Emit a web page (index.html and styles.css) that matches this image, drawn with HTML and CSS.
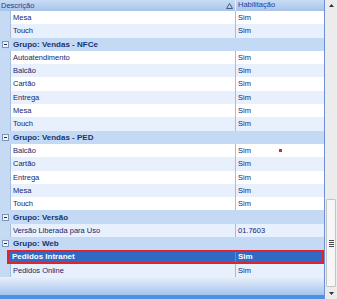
FILE: index.html
```html
<!DOCTYPE html>
<html lang="pt-BR">
<head>
    <meta charset="UTF-8">
    <title>Habilitações</title>
    <link rel="stylesheet" href="styles.css">
</head>
<body>
    <div class="grid">
        <div class="main">
            <div class="head">
                <div class="hcell c1">
                    <span>Descrição</span>
                    <svg class="sort" width="7" height="6" viewBox="0 0 7 6"><path d="M3.5 0.5 L6.5 5.5 L0.5 5.5 Z" fill="none" stroke="#4a5a78" stroke-width="1"/></svg>
                </div>
                <div class="hcell c2">Habilitação</div>
            </div>

            <div class="body">
                <div class="row"><span class="indent"></span><span class="cell c1">Mesa</span><span class="cell c2">Sim</span></div>
                <div class="row alt"><span class="indent"></span><span class="cell c1">Touch</span><span class="cell c2">Sim</span></div>

                <div class="group"><span class="toggle"></span>Grupo: Vendas - NFCe</div>
                <div class="row"><span class="indent"></span><span class="cell c1">Autoatendimento</span><span class="cell c2">Sim</span></div>
                <div class="row alt"><span class="indent"></span><span class="cell c1">Balcão</span><span class="cell c2">Sim</span></div>
                <div class="row"><span class="indent"></span><span class="cell c1">Cartão</span><span class="cell c2">Sim</span></div>
                <div class="row alt"><span class="indent"></span><span class="cell c1">Entrega</span><span class="cell c2">Sim</span></div>
                <div class="row"><span class="indent"></span><span class="cell c1">Mesa</span><span class="cell c2">Sim</span></div>
                <div class="row alt"><span class="indent"></span><span class="cell c1">Touch</span><span class="cell c2">Sim</span></div>

                <div class="group"><span class="toggle"></span>Grupo: Vendas - PED</div>
                <div class="row"><span class="indent"></span><span class="cell c1">Balcão</span><span class="cell c2">Sim</span></div>
                <div class="row alt"><span class="indent"></span><span class="cell c1">Cartão</span><span class="cell c2">Sim</span></div>
                <div class="row"><span class="indent"></span><span class="cell c1">Entrega</span><span class="cell c2">Sim</span></div>
                <div class="row alt"><span class="indent"></span><span class="cell c1">Mesa</span><span class="cell c2">Sim</span></div>
                <div class="row"><span class="indent"></span><span class="cell c1">Touch</span><span class="cell c2">Sim</span></div>

                <div class="group"><span class="toggle"></span>Grupo: Versão</div>
                <div class="row alt"><span class="indent"></span><span class="cell c1">Versão Liberada para Uso</span><span class="cell c2">01.7603</span></div>

                <div class="group"><span class="toggle"></span>Grupo: Web</div>
                <div class="row sel">
                    <span class="indent"></span>
                    <div class="selbox"><span class="cell c1">Pedidos Intranet</span><span class="cell c2">Sim</span></div>
                </div>
                <div class="row alt"><span class="indent"></span><span class="cell c1">Pedidos Online</span><span class="cell c2">Sim</span></div>

                <span class="dot"></span>
            </div>

            <div class="foot"></div>
        </div>

        <div class="scroll">
            <div class="sbtn">
                <svg width="5" height="3" viewBox="0 0 5 3"><path d="M2.5 0 L5 3 L0 3 Z" fill="#333"/></svg>
            </div>
            <div class="track">
                <div class="thumb">
                    <span class="grip"></span>
                </div>
            </div>
            <div class="sbtn">
                <svg width="5" height="3" viewBox="0 0 5 3"><path d="M0 0 L5 0 L2.5 3 Z" fill="#333"/></svg>
            </div>
        </div>
    </div>
</body>
</html>
```

FILE: styles.css
```css
body {
    margin: 0;
    font-family: "Liberation Sans", Arial, sans-serif;
    background-color: #ffffff;
}
.grid {
    display: flex;
    width: 337px;
    height: 299px;
    overflow: hidden;
}
.main {
    width: 324px;
    display: flex;
    flex-direction: column;
    border-right: 1px solid #6f8fd6;
}
.head {
    display: flex;
    height: 11px;
    background: linear-gradient(#c9dcf5, #a8c3ea);
    color: #1c4496;
    font-size: 7.5px;
    line-height: 10px;
}
.hcell {
    overflow: hidden;
    white-space: nowrap;
}
.head .c1 {
    width: 235px;
    padding-left: 1px;
    box-sizing: border-box;
    display: flex;
    justify-content: space-between;
    align-items: center;
    padding-right: 2px;
}
.head .c2 {
    flex: 1;
    border-left: 1px solid #e8f0fb;
    padding-left: 2px;
}
.sort {
    display: block;
}
.body {
    height: 266px;
    position: relative;
}
.row {
    display: flex;
    height: 13.3px;
    line-height: 13.3px;
    background-color: #ffffff;
    color: #201d6c;
    font-size: 7.5px;
}
.row.alt {
    background-color: #e7f0fc;
}
.indent {
    width: 10px;
    flex: none;
    background-color: #c6daf4;
    border-right: 1px solid #a6bddf;
}
.cell {
    white-space: nowrap;
    overflow: hidden;
}
.row .c1 {
    width: 224px;
    padding-left: 2px;
    box-sizing: border-box;
}
.row .c2 {
    flex: 1;
    border-left: 1px solid #aebad6;
    padding-left: 2px;
}
.group {
    display: flex;
    align-items: center;
    height: 13.3px;
    background-color: #c4d9f4;
    color: #173571;
    font-size: 8px;
    font-weight: bold;
}
.toggle {
    width: 5px;
    height: 5px;
    margin: 0 4px 0 2px;
    border: 1px solid #7f95bb;
    background: linear-gradient(#1d2f5c, #1d2f5c) center / 3px 1px no-repeat, #eef4fc;
}
.row.sel .indent {
    width: 7px;
    border-right: none;
}
.selbox {
    flex: 1;
    display: flex;
    border: 2px solid #e3232c;
    background-color: #316ac5;
    color: #ffffff;
    font-weight: bold;
    font-size: 8px;
    line-height: 9.3px;
}
.selbox .c1 {
    width: 226px;
    padding-left: 3px;
}
.selbox .c2 {
    border-left: 1px solid #5b88d2;
}
.dot {
    position: absolute;
    left: 279px;
    top: 138px;
    width: 3px;
    height: 3px;
    background-color: #e0262b;
}
.foot {
    height: 18px;
    background: linear-gradient(#e8f0fb, #a6c3ec);
    border-bottom: 4px solid #4a92e6;
}
.scroll {
    width: 12px;
    display: flex;
    flex-direction: column;
    background-color: #ececec;
}
.sbtn {
    height: 11px;
    display: flex;
    align-items: center;
    justify-content: center;
}
.track {
    flex: 1;
    padding-top: 188px;
}
.thumb {
    height: 86px;
    margin: 0 1px;
    background-color: #f6f6f6;
    border: 1px solid #c4c4c4;
    border-radius: 1px;
    display: flex;
    justify-content: center;
    align-items: center;
}
.grip {
    width: 5px;
    height: 7px;
    background: repeating-linear-gradient(#4a4a4a 0 1px, #f6f6f6 1px 2px);
}
```
